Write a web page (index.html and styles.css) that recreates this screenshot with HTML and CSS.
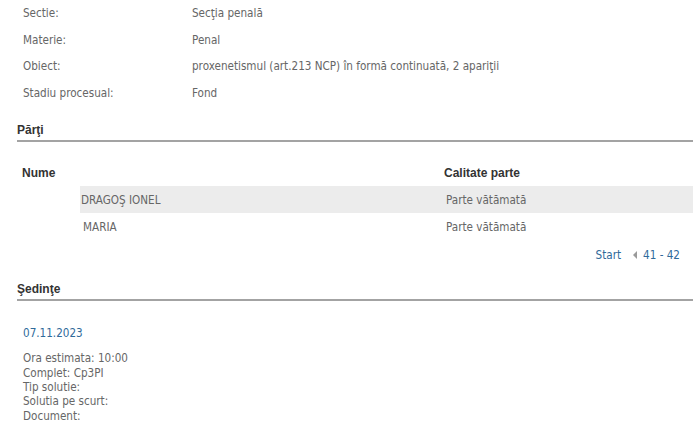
FILE: index.html
```html
<!DOCTYPE html>
<html lang="ro">
<head>
<meta charset="utf-8">
<link rel="stylesheet" href="styles.css">
</head>
<body>
<div class="page">
  <div class="info">
    <div class="info-row"><span class="lbl">Sectie:</span><span class="val">Secţia penală</span></div>
    <div class="info-row"><span class="lbl">Materie:</span><span class="val">Penal</span></div>
    <div class="info-row"><span class="lbl">Obiect:</span><span class="val">proxenetismul (art.213 NCP) în formă continuată, 2 apariţii</span></div>
    <div class="info-row"><span class="lbl">Stadiu procesual:</span><span class="val">Fond</span></div>
  </div>

  <h2 class="section-title parti-title">Părţi</h2>

  <div class="parti">
    <div class="parti-head">
      <span class="ph-name">Nume</span>
      <span class="ph-cal">Calitate parte</span>
    </div>
    <div class="parti-row alt">
      <span class="pr-name">DRAGOŞ IONEL</span>
      <span class="pr-cal">Parte vătămată</span>
    </div>
    <div class="parti-row">
      <span class="pr-name m">MARIA</span>
      <span class="pr-cal">Parte vătămată</span>
    </div>
  </div>

  <div class="pager">
    <a class="pg-link">Start</a>
    <span class="pg-arrow"></span>
    <span class="pg-range">41 - 42</span>
  </div>

  <h2 class="section-title sed-title">Şedinţe</h2>

  <div class="sedinta">
    <div class="sed-date">07.11.2023</div>
    <div class="sed-lines">
      <div>Ora estimata: 10:00</div>
      <div>Complet: Cp3PI</div>
      <div>Tip solutie:</div>
      <div>Solutia pe scurt:</div>
      <div>Document:</div>
    </div>
  </div>
</div>
</body>
</html>
```
FILE: styles.css
```css
html, body {
  margin: 0;
  padding: 0;
  background: #ffffff;
}
.page {
  font-family: "DejaVu Sans Condensed", "DejaVu Sans", sans-serif;
  font-size: 11.6px;
  color: #666666;
  width: 700px;
}
.info {
  display: flex;
  flex-direction: column;
}
.info-row {
  display: flex;
  height: 26.6px;
  align-items: center;
}
.lbl {
  width: 169px;
  padding-left: 23px;
}
.val {
  flex: 1;
}
.section-title {
  margin: 0 7px 0 17px;
  font-family: "Liberation Sans", Arial, sans-serif;
  font-size: 12px;
  font-weight: bold;
  color: #333333;
  border-bottom: 2px solid #a3a3a3;
  padding-bottom: 3px;
  line-height: 14px;
}
.parti-title {
  margin-top: 17px;
}
.parti {
  margin: 18px 7px 0 17px;
}
.parti-head {
  display: flex;
  font-family: "Liberation Sans", Arial, sans-serif;
  font-weight: bold;
  font-size: 12px;
  color: #333333;
  height: 26px;
  align-items: center;
}
.ph-name {
  width: 422px;
  padding-left: 5px;
}
.parti-row {
  display: flex;
  height: 27px;
  align-items: center;
  margin-left: 63px;
}
.parti-row.alt {
  background: #ececec;
}
.pr-name {
  width: 365px;
  padding-left: 1px;
}
.pr-name.m {
  padding-left: 3px;
  width: 363px;
}
.pg-link {
  color: #2f6a9a;
}
.pager {
  display: flex;
  justify-content: flex-end;
  align-items: center;
  gap: 4px;
  padding-right: 20px;
  margin-top: 8px;
  height: 14px;
  color: #2f6a9a;
}
.pg-arrow {
  width: 0;
  height: 0;
  border-top: 4px solid transparent;
  border-bottom: 4px solid transparent;
  border-right: 4px solid #9a9a9a;
  margin: 0 2px 0 8px;
}
.sed-title {
  margin-top: 20px;
}
.sedinta {
  padding-left: 23px;
}
.sed-date {
  color: #2f6a9a;
  margin-top: 25px;
  line-height: 14px;
}
.sed-lines {
  margin-top: 11px;
  line-height: 14.3px;
}
```
